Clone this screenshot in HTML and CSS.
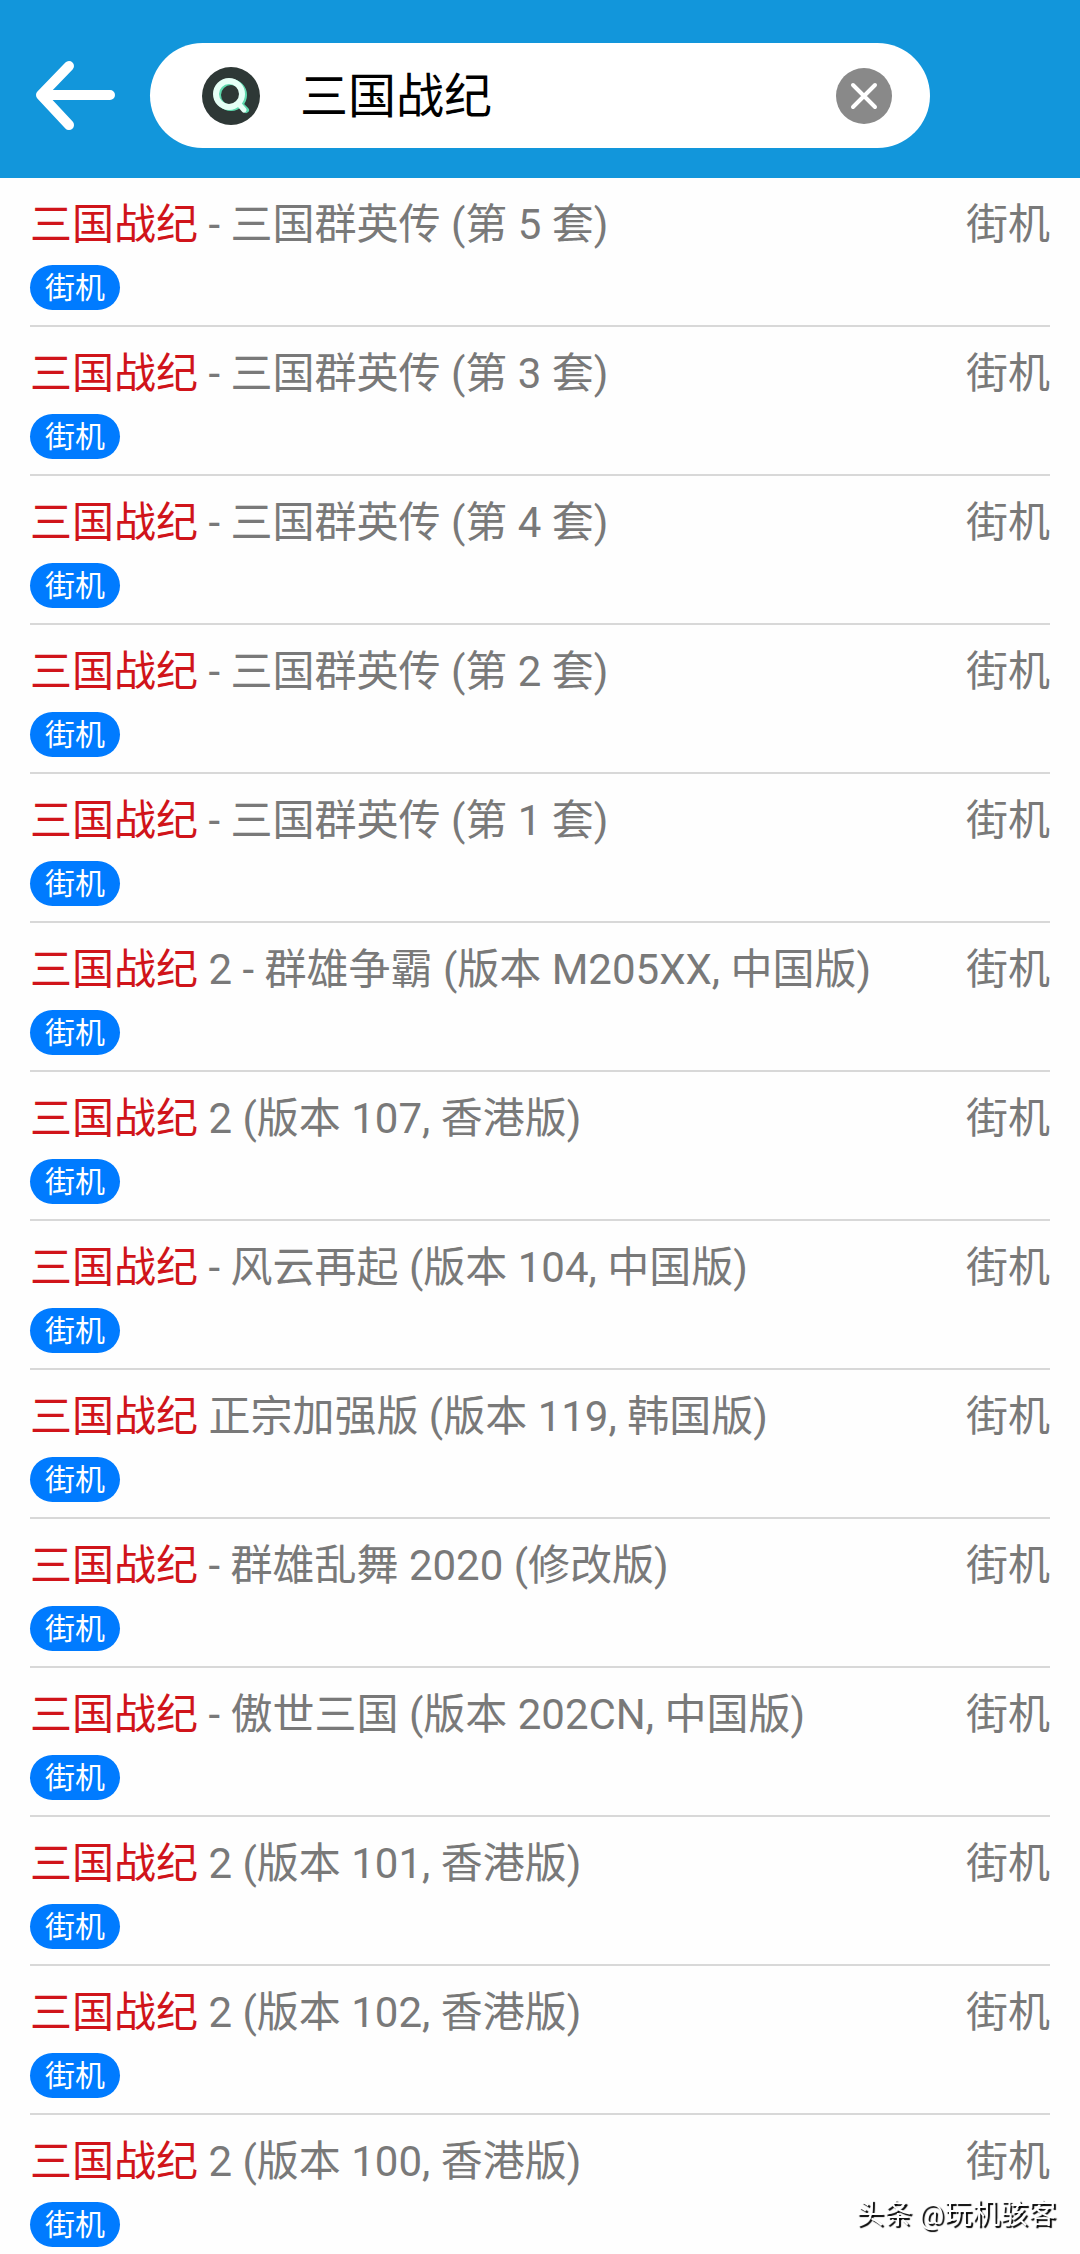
FILE: index.html
```
<!DOCTYPE html>
<html lang="zh-CN">
<head>
  <meta charset="UTF-8" />
  <meta name="viewport" content="width=device-width, initial-scale=1.0" />
  <title>三国战纪 - 搜索</title>
  <link rel="stylesheet" href="styles.css">
</head>
<body>
  <header>
    <button class="back" type="button" aria-label="返回">
      <svg width="80" height="70" viewBox="0 0 80 70" fill="none" stroke="#fff" stroke-width="10" stroke-linecap="round" stroke-linejoin="round">
        <path d="M75 34H6M34 5L6 34l28 30" />
      </svg>
    </button>
    <form class="search" role="search">
      <svg class="search-icon" width="58" height="58" viewBox="0 0 58 58" fill="none">
        <circle cx="29" cy="29" r="29" fill="#2e3836" />
        <ellipse cx="29" cy="28" rx="13" ry="13" stroke="#5fd9ae" stroke-width="6" />
        <path d="M37 36l7 7" stroke="#5fd9ae" stroke-width="6" stroke-linecap="round" />
        <ellipse cx="27" cy="27" rx="13" ry="13" stroke="#e6fff6" stroke-width="6" />
        <path d="M36 36l6 7" stroke="#e6fff6" stroke-width="5" stroke-linecap="round" />
      </svg>
      <input type="text" value="三国战纪" aria-label="搜索游戏">
      <button class="clear" type="button" aria-label="清除">
        <svg width="56" height="56" viewBox="0 0 56 56" fill="none">
          <circle cx="28" cy="28" r="28" fill="#898989" />
          <path d="M17 17l22 22M39 17L17 39" stroke="#fff" stroke-width="4" stroke-linecap="round" />
        </svg>
      </button>
    </form>
  </header>

  <ul class="results">
    <li>
      <div class="row"><h2><em>三国战纪</em> - 三国群英传 (第 5 套)</h2><span class="platform">街机</span></div>
      <span class="tag">街机</span>
    </li>
    <li>
      <div class="row"><h2><em>三国战纪</em> - 三国群英传 (第 3 套)</h2><span class="platform">街机</span></div>
      <span class="tag">街机</span>
    </li>
    <li>
      <div class="row"><h2><em>三国战纪</em> - 三国群英传 (第 4 套)</h2><span class="platform">街机</span></div>
      <span class="tag">街机</span>
    </li>
    <li>
      <div class="row"><h2><em>三国战纪</em> - 三国群英传 (第 2 套)</h2><span class="platform">街机</span></div>
      <span class="tag">街机</span>
    </li>
    <li>
      <div class="row"><h2><em>三国战纪</em> - 三国群英传 (第 1 套)</h2><span class="platform">街机</span></div>
      <span class="tag">街机</span>
    </li>
    <li>
      <div class="row"><h2><em>三国战纪</em> 2 - 群雄争霸 (版本 M205XX, 中国版)</h2><span class="platform">街机</span></div>
      <span class="tag">街机</span>
    </li>
    <li>
      <div class="row"><h2><em>三国战纪</em> 2 (版本 107, 香港版)</h2><span class="platform">街机</span></div>
      <span class="tag">街机</span>
    </li>
    <li>
      <div class="row"><h2><em>三国战纪</em> - 风云再起 (版本 104, 中国版)</h2><span class="platform">街机</span></div>
      <span class="tag">街机</span>
    </li>
    <li>
      <div class="row"><h2><em>三国战纪</em> 正宗加强版 (版本 119, 韩国版)</h2><span class="platform">街机</span></div>
      <span class="tag">街机</span>
    </li>
    <li>
      <div class="row"><h2><em>三国战纪</em> - 群雄乱舞 2020 (修改版)</h2><span class="platform">街机</span></div>
      <span class="tag">街机</span>
    </li>
    <li>
      <div class="row"><h2><em>三国战纪</em> - 傲世三国 (版本 202CN, 中国版)</h2><span class="platform">街机</span></div>
      <span class="tag">街机</span>
    </li>
    <li>
      <div class="row"><h2><em>三国战纪</em> 2 (版本 101, 香港版)</h2><span class="platform">街机</span></div>
      <span class="tag">街机</span>
    </li>
    <li>
      <div class="row"><h2><em>三国战纪</em> 2 (版本 102, 香港版)</h2><span class="platform">街机</span></div>
      <span class="tag">街机</span>
    </li>
    <li>
      <div class="row"><h2><em>三国战纪</em> 2 (版本 100, 香港版)</h2><span class="platform">街机</span></div>
      <span class="tag">街机</span>
    </li>
  </ul>

  <div class="watermark">头条 @玩机骇客</div>
</body>
</html>
```
FILE: styles.css
```
* {
  margin: 0;
  padding: 0;
  box-sizing: border-box;
}

:root {
  --primary: #1296db;
  --tag: #007bff;
  --highlight: #d0141a;
  --text: #797979;
  --line: #d8d8d8;
}

body {
  font-family: Roboto, "Noto Sans CJK SC", sans-serif;
  background-color: #fefefe;
  color: var(--text);
}

button {
  border: none;
  background: none;
  cursor: pointer;
}

svg {
  display: block;
}

header {
  display: flex;
  align-items: center;
  gap: 35px;
  padding: 43px 150px 30px 35px;
  background-color: var(--primary);
}

.search {
  flex: 1;
  min-width: 0;
  display: flex;
  align-items: center;
  height: 105px;
  padding: 0 38px 0 52px;
  background-color: #fff;
  border-radius: 53px;
}

.search input {
  flex: 1;
  min-width: 0;
  margin: 0 40px;
  padding-top: 3px;
  border: none;
  outline: none;
  background: none;
  font-family: inherit;
  font-size: 48px;
  line-height: 72px;
  color: #000;
}

.results {
  list-style: none;
  padding: 0 30px;
}

.results li {
  padding: 17px 0 15px;
  border-bottom: 2px solid var(--line);
}

.results li:last-child {
  padding-bottom: 0;
  border-bottom: none;
}

.row {
  display: flex;
  justify-content: space-between;
  margin-bottom: 10px;
  font-size: 42px;
  line-height: 60px;
}

.row h2 {
  font-size: inherit;
  font-weight: 400;
}

.row em {
  font-style: normal;
  color: var(--highlight);
}

.platform {
  flex-shrink: 0;
}

.tag {
  display: block;
  width: fit-content;
  padding: 0 15px;
  border-radius: 23px;
  background-color: var(--tag);
  color: #fff;
  font-size: 30px;
  line-height: 45px;
}

/* stays over the list in the bottom corner */
.watermark {
  position: fixed;
  right: 24px;
  bottom: 19px;
  font-size: 28px;
  line-height: 40px;
  color: #fff;
  text-shadow: 2px 2px 1px #000;
}
```
